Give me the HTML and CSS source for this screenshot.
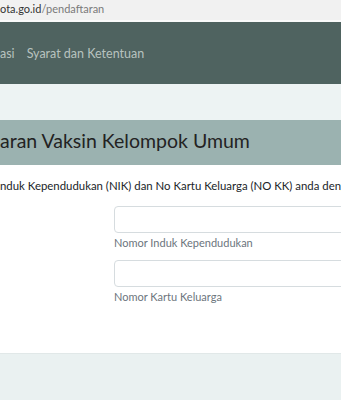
FILE: index.html
```html
<!DOCTYPE html>
<html lang="id">
  <head>
    <meta charset="UTF-8" />
    <meta name="viewport" content="width=device-width, initial-scale=1.0" />
    <title>Pendaftaran Vaksin Kelompok Umum</title>
    <link rel="stylesheet" href="styles.css">
  </head>
  <body>
    <div class="address-bar">
      <span class="host">ota.go.id</span><span class="path">/pendaftaran</span>
    </div>

    <nav class="navbar">
      <a href="#" class="nav-link">asi</a>
      <a href="#" class="nav-link">Syarat dan Ketentuan</a>
    </nav>

    <main class="content">
      <div class="page-header">
        <h1>aran Vaksin Kelompok Umum</h1>
      </div>

      <div class="form-card">
        <p class="intro">nduk Kependudukan (NIK) dan No Kartu Keluarga (NO KK) anda dengan benar</p>

        <div class="form-group">
          <input type="text" id="nik" class="form-control" />
          <small class="help-text">Nomor Induk Kependudukan</small>
        </div>

        <div class="form-group">
          <input type="text" id="nokk" class="form-control" />
          <small class="help-text">Nomor Kartu Keluarga</small>
        </div>
      </div>
    </main>

    <footer class="footer"></footer>
  </body>
</html>
```

FILE: styles.css
```css
body {
  font-family: "Lato", "Open Sans", sans-serif;
  background-color: #edf3f3;
  margin: 0;
  overflow: hidden;
  white-space: nowrap;
}

.address-bar {
  background-color: #f1f1f1;
  height: 20px;
  font-size: 11px;
  line-height: 18px;
  border-bottom: 2px solid #fafafa;
}

.address-bar .host {
  color: #333;
}

.address-bar .path {
  color: #7a7a7a;
}

.navbar {
  background-color: #4f6360;
  height: 62px;
  display: flex;
  align-items: center;
  gap: 12px;
}

.nav-link {
  color: #b7c2bf;
  text-decoration: none;
  font-size: 12.5px;
}

.content {
  padding-top: 36px;
}

.page-header {
  background-color: #9bb2b0;
  height: 45px;
  display: flex;
  align-items: center;
}

.page-header h1 {
  margin: 0 0 4px;
  font-size: 19.5px;
  font-weight: 400;
  color: #232323;
}

.form-card {
  background-color: #fff;
  height: 188px;
  padding-top: 13px;
  box-sizing: border-box;
}

.intro {
  margin: 0 0 12px;
  font-size: 11.4px;
  line-height: 16px;
  color: #212529;
}

.form-group {
  margin-left: 114px;
  margin-bottom: 11px;
}

.form-control {
  display: block;
  width: 240px;
  height: 27px;
  box-sizing: border-box;
  border: 1px solid #d6dcdf;
  border-radius: 4px;
  padding: 4px 8px;
}

.help-text {
  display: block;
  margin-top: 3px;
  font-size: 11px;
  color: #6c757d;
}

.footer {
  border-top: 1px solid #e1e8e8;
  background-color: #eaf1f1;
  height: 60px;
}
```
